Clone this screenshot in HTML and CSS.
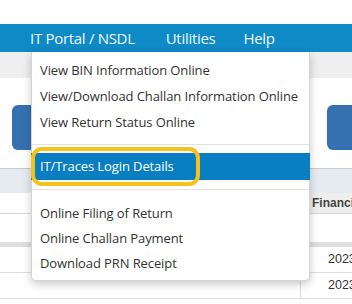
FILE: index.html
```html
<!DOCTYPE html>
<html>
<head>
<meta charset="utf-8">
<link rel="stylesheet" href="styles.css">
</head>
<body>
<div class="page">
  <div class="top"></div>
  <nav class="nav">
    <span class="nav-item">IT Portal / NSDL</span>
    <span class="nav-item util">Utilities</span>
    <span class="nav-item help">Help</span>
  </nav>
  <div class="subbar"></div>
  <div class="buttons">
    <div class="btn btn-left"></div>
    <div class="btn btn-right"></div>
  </div>
  <div class="band"></div>
  <div class="table">
    <div class="row head"><div class="c1"></div><div class="c2">Financial Year</div></div>
    <div class="row filter"><div class="c1"></div><div class="c2"></div></div>
    <div class="row sep"></div>
    <div class="row data"><div class="c1"></div><div class="c2">2023-24</div></div>
    <div class="row data"><div class="c1"></div><div class="c2">2023-24</div></div>
  </div>

  <div class="dropdown">
    <div class="item">View BIN Information Online</div>
    <div class="item">View/Download Challan Information Online</div>
    <div class="item">View Return Status Online</div>
    <div class="divider d1"></div>
    <div class="item active">IT/Traces Login Details</div>
    <div class="divider d2"></div>
    <div class="item small">Online Filing of Return</div>
    <div class="item small">Online Challan Payment</div>
    <div class="item small">Download PRN Receipt</div>
  </div>
  <div class="callout"></div>
</div>
</body>
</html>
```
FILE: styles.css
```css
* { box-sizing: border-box; }
html, body { margin: 0; padding: 0; background: #fff; }
body { font-family: "Open Sans", "Noto Sans", sans-serif; }
.page { position: relative; width: 352px; height: 304px; overflow: hidden; }
.top { height: 24px; background: #fff; }
.nav {
  height: 28px;
  background: #0e8ac6;
  display: flex;
  align-items: center;
  padding-left: 30px;
}
.nav-item { color: #eef8ff; font-size: 15px; letter-spacing: -0.3px; }
.util { margin-left: 31px; }
.help { margin-left: 28px; }
.subbar { height: 26px; background: #efefef; }
.buttons {
  height: 90px;
  display: flex;
  justify-content: space-between;
  padding: 27px 0 0 12px;
}
.btn { height: 45px; background: #3571b1; border-radius: 6px; }
.btn-left { width: 60px; }
.btn-right { width: 25px; border-radius: 6px 0 0 6px; }
.band { height: 25px; border-top: 1px solid #c8ccd2; background: #e6ebf1; }
.table { font-family: "Liberation Sans", Arial, sans-serif; font-size: 12px; color: #333; }
.row { display: flex; }
.c1 { width: 301px; flex-shrink: 0; border-right: 1px solid #dcdcdc; }
.c2 { flex: 1; min-width: 0; overflow: hidden; padding-left: 11px; white-space: nowrap; }
.head { height: 21px; border-bottom: 1px solid #d6d6d6; }
.head .c2 { background: #eeeeee; color: #444; font-weight: bold; line-height: 21px; }
.filter { height: 28px; }
.sep { height: 5px; background: #dedede; }
.data { height: 26px; border-bottom: 1px solid #dddddd; }
.data .c2 { padding-left: 27px; line-height: 24px; font-size: 12.5px; }

.dropdown {
  position: absolute;
  left: 31px;
  top: 52px;
  width: 279px;
  height: 229px;
  background: #fff;
  border: 1px solid #d4d4d4;
  border-top: none;
  border-radius: 0 0 5px 5px;
  box-shadow: 0 3px 8px rgba(0,0,0,0.22);
  padding-top: 5px;
}
.item {
  height: 26px;
  line-height: 26px;
  padding-left: 8px;
  font-size: 13px;
  color: #333;
  white-space: nowrap;
  letter-spacing: -0.1px;
}
.item.small { height: 25px; line-height: 25px; }
.item.active {
  height: 27px;
  line-height: 27px;
  background: #0a7ec2;
  color: #fff;
  margin-left: -1px;
  margin-right: -1px;
  padding-left: 9px;
}
.divider { height: 1px; background: #e2e2e2; }
.d1 { margin: 9px 0 8px; }
.d2 { margin: 9px 0 11px; }
.callout {
  position: absolute;
  left: 31px;
  top: 147px;
  width: 169px;
  height: 39px;
  border: 4px solid #f4c21a;
  border-radius: 11px;
}
```
